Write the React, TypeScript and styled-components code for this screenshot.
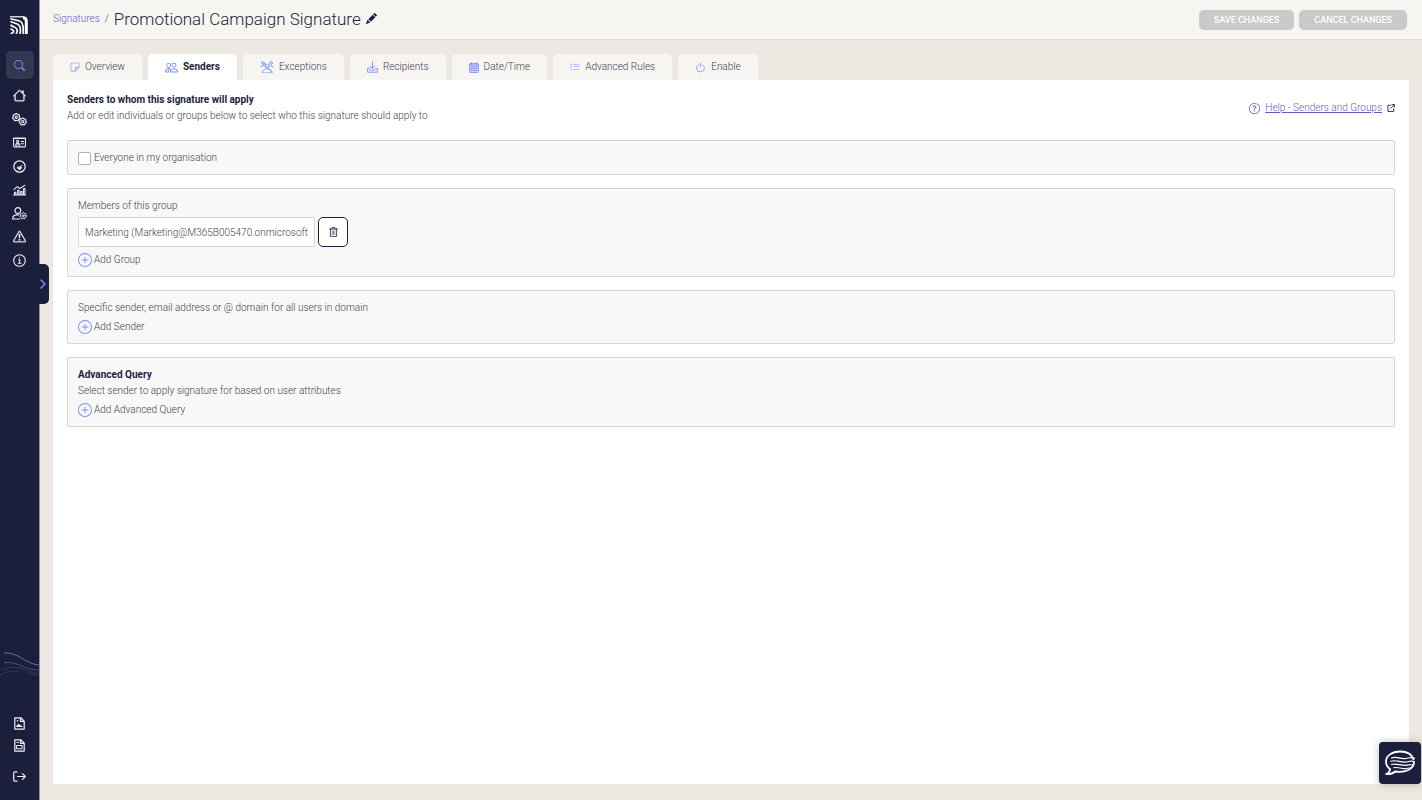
import React from "react";
import styled, { createGlobalStyle, css } from "styled-components";
import {
  BsExclamationTriangle,
  BsHouse,
  BsListUl,
  BsPencilFill,
  BsPeople,
  BsPlusCircle,
  BsPower,
  BsQuestionCircle,
  BsSearch,
  BsSticky,
} from "react-icons/bs";

const color = {
  navy: "#1b1f3b",
  navyLight: "#33374f",
  accent: "#7b8cf5",
  link: "#5c5fc4",
  text: "#3f3f50",
  sand: "#ede8e2",
  cream: "#f7f5f2",
  card: "#f8f8f8",
  line: "#d6d6d8",
};

const GlobalStyle = createGlobalStyle`
  *, *::before, *::after { box-sizing: border-box; }
  body {
    margin: 0;
    background: ${color.sand};
    color: ${color.text};
    font: 300 10px/16px Roboto, "Liberation Sans", sans-serif;
  }
  button, input { font: inherit; color: inherit; }
  h1, h2, p { margin: 0; }
  svg { display: block; flex: none; }
`;

const Shell = styled.div`
  display: flex;
  min-height: 100vh;
`;

const Sidebar = styled.aside`
  position: sticky;
  top: 0;
  z-index: 2;
  display: flex;
  flex-direction: column;
  align-items: center;
  flex: none;
  width: 40px;
  height: 100vh;
  padding: 16px 0 14px;
  background: ${color.navy};
  border-right: 1px solid #8f90a3;
  color: #f2f0f5;
`;

const HomeLink = styled.a`
  color: #fff;
`;

const SearchButton = styled.button`
  display: grid;
  place-items: center;
  flex: none;
  width: 28px;
  height: 28px;
  margin: 17px 0 5px;
  padding: 0;
  border: 0;
  border-radius: 5px;
  background: ${color.navyLight};
  color: ${color.accent};
`;

const MainNav = styled.nav`
  display: grid;
  flex: none;
  grid-template-rows: repeat(8, 1fr);
  height: 188px;
`;

const BottomNav = styled.nav`
  display: flex;
  flex-direction: column;
  gap: 2px;
  margin-top: auto;
`;

const NavLink = styled.a<{ $spaced?: boolean }>`
  display: grid;
  place-items: center;
  width: 27px;
  min-height: 20px;
  margin-top: ${(p) => (p.$spaced ? "9px" : "0")};
  color: inherit;
`;

const Expand = styled.button`
  position: absolute;
  top: 264px;
  left: 36px;
  display: grid;
  place-items: center;
  width: 13px;
  height: 40px;
  padding: 0;
  border: 0;
  border-radius: 0 5px 5px 0;
  background: ${color.navy};
  color: ${color.accent};
`;

const Waves = styled.svg`
  position: absolute;
  left: 0;
  bottom: 120px;
`;

const Page = styled.div`
  display: flex;
  flex-direction: column;
  flex: 1;
  min-width: 0;
`;

const Header = styled.header`
  display: flex;
  align-items: center;
  justify-content: space-between;
  height: 40px;
  padding: 0 15px 0 13px;
  background: ${color.cream};
  border-bottom: 1px solid #dcdad8;
`;

const Crumbs = styled.div`
  display: flex;
  align-items: center;
  gap: 5px;
  padding-bottom: 2px;
`;

const CrumbLink = styled.a`
  color: ${color.link};
  text-decoration: none;
`;

const Title = styled.h1`
  color: ${color.navy};
  font-size: 17px;
  font-weight: 300;
  line-height: 20px;
`;

const IconButton = styled.button`
  padding: 0;
  border: 0;
  background: none;
  color: ${color.navy};
`;

const Actions = styled.div`
  display: flex;
  gap: 5px;
`;

const ActionButton = styled.button`
  height: 20px;
  padding: 0 15px;
  border: 0;
  border-radius: 5px;
  background: #c9c9c9;
  color: #fff;
  font-size: 9px;
  font-weight: 500;
  line-height: 20px;
  text-transform: uppercase;
`;

const Main = styled.main`
  display: flex;
  flex-direction: column;
  flex: 1;
  padding: 14px 13px 16px;
`;

const Tabs = styled.div`
  display: flex;
  gap: 6px;
`;

const Tab = styled.button<{ $active?: boolean }>`
  display: flex;
  align-items: center;
  gap: 5px;
  height: 26px;
  padding: 0 17px;
  border: 0;
  border-radius: 5px 5px 0 0;
  background: ${color.cream};
  white-space: nowrap;

  svg { color: ${color.accent}; }

  ${(p) =>
    p.$active &&
    css`
      background: #fff;
      color: ${color.navy};
      font-weight: 700;
    `}
`;

const Panel = styled.section`
  display: flex;
  flex-direction: column;
  flex: 1;
  gap: 13px;
  padding: 12px 14px;
  background: #fff;
`;

const PanelHead = styled.div`
  display: flex;
  align-items: center;
  justify-content: space-between;
  margin-bottom: 3px;
`;

const Heading = styled.h2`
  color: ${color.navy};
  font-size: 10px;
  font-weight: 700;
  line-height: 16px;
`;

const HelpLink = styled.a`
  display: flex;
  align-items: center;
  gap: 5px;
  color: ${color.link};
`;

const HelpText = styled.span`
  text-decoration: underline;
`;

const Card = styled.div`
  padding: 9px 10px 8px;
  background: ${color.card};
  border: 1px solid ${color.line};
  border-radius: 2px;
`;

const CheckLabel = styled.label`
  display: flex;
  align-items: center;
  gap: 3px;
`;

const Checkbox = styled.input`
  appearance: none;
  width: 13px;
  height: 13px;
  margin: 0;
  border: 1px solid #aeaeb6;
  border-radius: 2px;
  background: #fff;

  &:checked { background: ${color.accent}; }
`;

const FieldLabel = styled.label`
  display: block;
`;

const FieldRow = styled.div`
  display: flex;
  gap: 3px;
  margin: 3px 0 5px;
`;

const TextField = styled.input`
  width: 237px;
  height: 30px;
  padding: 0 6px;
  border: 1px solid ${color.line};
  border-radius: 2px;
  background: #fff;
`;

const DeleteButton = styled.button`
  display: grid;
  place-items: center;
  width: 30px;
  height: 30px;
  padding: 0;
  border: 1px solid ${color.navy};
  border-radius: 5px;
  background: #fff;
  color: ${color.navy};
`;

const AddButton = styled.button`
  display: flex;
  align-items: center;
  gap: 2px;
  height: 16px;
  margin-top: 3px;
  padding: 0;
  border: 0;
  background: none;

  svg { color: ${color.accent}; }
`;

const ChatButton = styled.button`
  position: fixed;
  right: 1px;
  bottom: 16px;
  z-index: 3;
  display: grid;
  place-items: center;
  width: 42px;
  height: 42px;
  padding: 0;
  border: 0;
  border-radius: 4px;
  background: ${color.navy};
  box-shadow: 0 0 8px rgba(0, 0, 0, 0.25);
  color: #fff;
`;

const stroke = {
  fill: "none",
  stroke: "currentColor",
  strokeLinecap: "round",
  strokeLinejoin: "round",
} as const;

const Logo = () => (
  <svg width="19" height="18" viewBox="0 0 19 18" fill="none" stroke="currentColor">
    <path strokeWidth="1.200" d="M0 .8h14" />
    <path strokeWidth="3" d="M13 1.700q3.300 0 3.300 3.300v13" />
    <path strokeWidth="1.500" d="M.5 2.800c4 1.500 8 .8 10.500 3s2.400 6 2.200 12.200" />
    <path strokeWidth="1.700" d="M.5 5.500c3.500 2 6.500 1.300 8.700 4s1.400 5 .8 8.500" />
    <path strokeWidth="1.700" d="M.5 9c2.500 2 5 1.700 6.200 3.800s.8 3.200-.7 5.200" />
    <path strokeWidth="1.700" d="M.5 12.800c2 .8 3.200 1.200 3.200 2.400s-1.200 2-3.200 2.300" />
  </svg>
);

const TEETH = 7;

const gear = (cx: number, cy: number, r: number) => {
  const points: string[] = [];
  for (let i = 0; i < TEETH * 4; i++) {
    const a = ((i + 0.5) * Math.PI) / (TEETH * 2);
    const d = i % 4 < 2 ? r : r * 0.84;
    points.push(`${(cx + d * Math.cos(a)).toFixed(2)},${(cy + d * Math.sin(a)).toFixed(2)}`);
  }
  return points.join(" ");
};

const GearsIcon = () => (
  <svg width="15" height="13" viewBox="0 0 15 13" {...stroke} strokeWidth="1.100">
    <polygon points={gear(4.3, 4.3, 3.7)} />
    <circle cx="4.300" cy="4.300" r="1.100" />
    <polygon points={gear(10.8, 8.6, 3.6)} />
    <circle cx="10.800" cy="8.600" r="1.100" />
  </svg>
);

const CardIcon = () => (
  <svg width="13" height="11" viewBox="0 0 14 11" {...stroke} strokeWidth="1.100">
    <rect x=".6" y=".6" width="12.800" height="9.600" rx=".8" />
    <path d="M.6 1.200h12.800M8.800 4.400h2.600M8.800 6.800h2.600" />
    <circle cx="5" cy="4.300" r="1.100" />
    <path d="M2.600 8.200c.3-1.500 1.200-1.900 2.400-1.900s2.100.4 2.400 1.900z" />
  </svg>
);

const GaugeIcon = () => (
  <svg width="13" height="13" viewBox="0 0 13 13" {...stroke} strokeWidth="1.200">
    <circle cx="6.500" cy="6.500" r="5.700" />
    <path d="M4.600 7.500a1.900 1.900 0 0 0 3.800 0zM7 7L9 5.500" fill="currentColor" strokeWidth="1" />
  </svg>
);

const ChartIcon = () => (
  <svg width="13" height="12" viewBox="0 0 14 12" {...stroke} strokeWidth="1.100">
    <path d="M1 5.500L4.500 2.400L7.500 4.400L12.800.8" />
    <path d="M1.600 11.400V8.500h1.500v2.900M5 11.400V6.200h1.500v5.200M8.300 11.400V7.500h1.500v3.900M11.400 11.400V4.500h1.500v6.900M.6 11.400h12.900" />
  </svg>
);

const UserGearIcon = () => (
  <svg width="15" height="13" viewBox="0 0 15 13" {...stroke} strokeWidth="1.200">
    <circle cx="5.800" cy="3.600" r="2.900" />
    <path d="M7 7.800H4.500Q.7 8 .7 12h7" />
    <polygon points={gear(11.2, 8.8, 3.2)} strokeWidth="1" />
    <circle cx="11.200" cy="8.800" r="1" strokeWidth="1" />
  </svg>
);

const InfoIcon = () => (
  <svg width="13" height="13" viewBox="0 0 13 13" {...stroke} strokeWidth="1.100">
    <circle cx="6.500" cy="6.500" r="5.800" />
    <path d="M5.500 5.800h1.200v3.300M5.400 9.200h2.500M6.500 3.600v.2" />
  </svg>
);

const SignOutIcon = () => (
  <svg width="13" height="11" viewBox="0 0 13 11" {...stroke} strokeWidth="1.200">
    <path d="M4 .8H1.800Q.7.800.7 1.900v7.200q0 1.100 1.100 1.100H4M4.500 5.500h7.700M9.500 2.700l2.800 2.800l-2.800 2.800" />
  </svg>
);

const FileImageIcon = () => (
  <svg width="11" height="13" viewBox="0 0 11 13" {...stroke} strokeWidth="1.200">
    <path d="M.8.8h6l3.400 3.300v8H.8zM6.500.8v3.500h3.600" />
    <path d="M2.800 9.500l1.700-2l1.300 1l2 1z" fill="currentColor" />
    <path d="M3 3.800h1" />
  </svg>
);

const FileTextIcon = () => (
  <svg width="11" height="13" viewBox="0 0 11 13" {...stroke} strokeWidth="1.200">
    <path d="M.8.8h6l3.400 3.300v8H.8zM6.500.8v3.500h3.600" />
    <path d="M2.900 3.500h1.600M2.900 6.500h5.200v3.300H2.900z" strokeWidth="1" />
  </svg>
);

const ChevronIcon = () => (
  <svg width="7" height="10" viewBox="0 0 7 10" {...stroke} strokeWidth="1.500">
    <path d="M2 1l4 4l-4 4" />
  </svg>
);

const ExceptionsIcon = () => (
  <svg width="14" height="12" viewBox="0 0 14 12" {...stroke} strokeWidth=".8">
    <circle cx="7" cy="5" r="2" />
    <circle cx="11" cy="2" r="1.400" />
    <circle cx="3.300" cy="2.200" r="1.300" />
    <path d="M2.500 11.500c.3-2.500 2-3.700 4.500-3.700s4.200 1.200 4.500 3.700zM10 5.300c1.800-.9 3.300-.3 3.500 1M.5 6.200c.2-1.300 1.700-1.900 3.300-1M1 .6l12 10.900" />
  </svg>
);

const RecipientsIcon = () => (
  <svg width="11" height="12" viewBox="0 0 11 12" {...stroke} strokeWidth=".9">
    <path d="M5.500.6v6.800M3.200 5.200l2.300 2.300l2.300-2.300M.6 7.500v3.700h9.800V7.500H8.700L7.600 9.200H3.400L2.300 7.500z" />
  </svg>
);

const CalendarIcon = () => (
  <svg width="10" height="11" viewBox="0 0 10 11" {...stroke} strokeWidth=".8">
    <rect x=".5" y="1.500" width="9" height="9" rx="1" />
    <path d="M.5 4h9M.5 6.200h9M.5 8.400h9M2.800 4v6.500M5 4v6.500M7.200 4v6.500M2.500.5v2M7.500.5v2M.5 2.800h9" />
  </svg>
);

const ExternalIcon = () => (
  <svg width="8" height="8" viewBox="0 0 9 9" {...stroke} stroke={color.navy}>
    <path d="M3.800 1.500H1v6.800h6.600V5.500M5.500.7h2.800v2.800M8.200.8L4 5" />
  </svg>
);

const TrashIcon = () => (
  <svg width="9" height="10" viewBox="0 0 9 10" {...stroke} strokeWidth=".8">
    <path d="M.6 2h7.800M3 2V.6h3V2M1.400 2v7.400h6.200V2" />
    <path d="M3.200 3.900v3.600M4.500 3.900v3.600M5.800 3.900v3.600" strokeWidth=".5" />
  </svg>
);

const ChatIcon = () => (
  <svg width="32" height="26" viewBox="0 0 32 26" {...stroke}>
    <path
      strokeWidth="1.800"
      d="M29.500 9.500C28 4.300 22.500 1.500 16 1.500C8 1.500 2 5.800 2 11.500c0 3.400 1.600 5.900 4.200 7.800c-.3 2-1.500 3.500-4 4.800c4 .2 6.800-.6 9-2.600c10 1.800 18.800-2.600 18.800-9.500"
    />
    <path
      strokeWidth="1.200"
      d="M7.500 8c5-2.200 8 1 13 .6c4-.3 6-2 10-.4M7 11.300c5-2 9 1.200 14 .8c4-.3 5-1.700 8-.6M7.500 14.500c5-1.700 9 1.300 14 .9c3.500-.3 4.500-1.200 7-.4M10 17.700c4-1 7 1.200 11 .9c2.500-.2 3.500-.9 5-.5"
    />
  </svg>
);

const mainLinks = [
  { label: "Home", icon: <BsHouse size={13} strokeWidth=".5" /> },
  { label: "Configuration", icon: <GearsIcon /> },
  { label: "Signatures", icon: <CardIcon /> },
  { label: "Dashboard", icon: <GaugeIcon /> },
  { label: "Reports", icon: <ChartIcon /> },
  { label: "User settings", icon: <UserGearIcon /> },
  { label: "Alerts", icon: <BsExclamationTriangle size={13} strokeWidth=".4" /> },
  { label: "Information", icon: <InfoIcon /> },
];

const tabs = [
  { label: "Overview", icon: <BsSticky size={10} /> },
  { label: "Senders", icon: <BsPeople size={13} />, active: true },
  { label: "Exceptions", icon: <ExceptionsIcon /> },
  { label: "Recipients", icon: <RecipientsIcon /> },
  { label: "Date/Time", icon: <CalendarIcon /> },
  { label: "Advanced Rules", icon: <BsListUl size={10} /> },
  { label: "Enable", icon: <BsPower size={11} /> },
];

const Add = ({ children }: { children: React.ReactNode }) => (
  <AddButton type="button">
    <BsPlusCircle size={14} />
    {children}
  </AddButton>
);

export default function App() {
  return (
    <>
      <GlobalStyle />
      <Shell>
        <Sidebar>
          <HomeLink href="#" aria-label="Start page">
            <Logo />
          </HomeLink>
          <SearchButton type="button" aria-label="Search">
            <BsSearch size={11} strokeWidth=".4" />
          </SearchButton>
          <MainNav aria-label="Main">
            {mainLinks.map((l) => (
              <NavLink key={l.label} href="#" aria-label={l.label}>
                {l.icon}
              </NavLink>
            ))}
          </MainNav>
          <Expand type="button" aria-label="Expand menu">
            <ChevronIcon />
          </Expand>
          <Waves width="39" height="28" viewBox="0 0 39 28" fill="none" stroke="#6d76a8">
            <path d="M4 1c15-1 21 11 35 12" strokeOpacity=".9" />
            <path d="M4 11c12-3 19 7 35 7" strokeOpacity=".55" />
            <path d="M2 18c10-5 17-2 24 0s9 4 13 3" strokeOpacity=".3" />
            <path d="M0 23c9-5 14-4 20-3M27 20c4 2 8 3 12 3" strokeOpacity=".25" />
          </Waves>
          <BottomNav aria-label="Documents and sign out">
            <NavLink href="#" aria-label="Image file">
              <FileImageIcon />
            </NavLink>
            <NavLink href="#" aria-label="Text file">
              <FileTextIcon />
            </NavLink>
            <NavLink href="#" aria-label="Sign out" $spaced>
              <SignOutIcon />
            </NavLink>
          </BottomNav>
        </Sidebar>

        <Page>
          <Header>
            <Crumbs>
              <CrumbLink href="#">Signatures</CrumbLink>
              <span>/</span>
              <Title>Promotional Campaign Signature</Title>
              <IconButton type="button" aria-label="Rename">
                <BsPencilFill size={11} />
              </IconButton>
            </Crumbs>
            <Actions>
              <ActionButton type="button">Save changes</ActionButton>
              <ActionButton type="button">Cancel changes</ActionButton>
            </Actions>
          </Header>

          <Main>
            <Tabs role="tablist">
              {tabs.map((t) => (
                <Tab key={t.label} type="button" role="tab" aria-selected={!!t.active} $active={t.active}>
                  {t.icon}
                  {t.label}
                </Tab>
              ))}
            </Tabs>
            <Panel role="tabpanel">
              <PanelHead>
                <div>
                  <Heading>Senders to whom this signature will apply</Heading>
                  <p>Add or edit individuals or groups below to select who this signature should apply to</p>
                </div>
                <HelpLink href="#">
                  <BsQuestionCircle size={11} />
                  <HelpText>Help - Senders and Groups</HelpText>
                  <ExternalIcon />
                </HelpLink>
              </PanelHead>
              <Card>
                <CheckLabel>
                  <Checkbox type="checkbox" />
                  Everyone in my organisation
                </CheckLabel>
              </Card>
              <Card>
                <FieldLabel htmlFor="group">Members of this group</FieldLabel>
                <FieldRow>
                  <TextField id="group" type="text" defaultValue="Marketing (Marketing@M365B005470.onmicrosoft" />
                  <DeleteButton type="button" aria-label="Remove group">
                    <TrashIcon />
                  </DeleteButton>
                </FieldRow>
                <Add>Add Group</Add>
              </Card>
              <Card>
                <p>Specific sender, email address or @ domain for all users in domain</p>
                <Add>Add Sender</Add>
              </Card>
              <Card>
                <Heading>Advanced Query</Heading>
                <p>Select sender to apply signature for based on user attributes</p>
                <Add>Add Advanced Query</Add>
              </Card>
            </Panel>
          </Main>
        </Page>
        <ChatButton type="button" aria-label="Open chat">
          <ChatIcon />
        </ChatButton>
      </Shell>
    </>
  );
}
